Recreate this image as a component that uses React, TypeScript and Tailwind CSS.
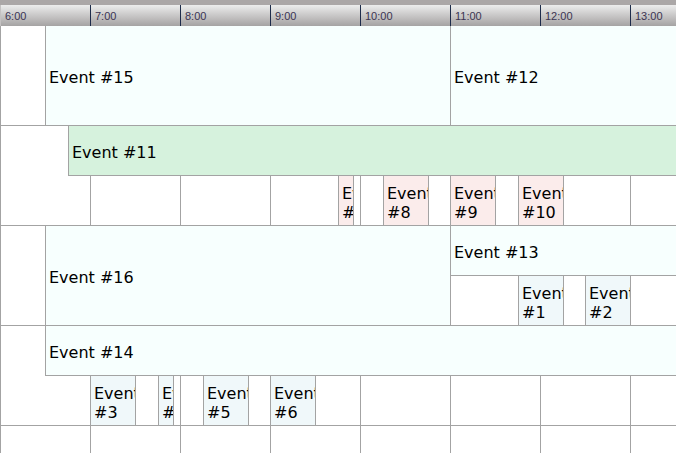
import React from "react";

const HOUR_W = 90;
const TOTAL_W = 720; // 6:00 .. 14:00
const START_MIN = 6 * 60;
const px = (h: number, m = 0) => Math.round((h * 60 + m - START_MIN) * 1.5);

type Tone = "azure" | "green" | "pink" | "blue";

const TONE: Record<Tone, string> = {
  azure: "bg-[#f7fffe]",
  green: "bg-[#d6f2dd]",
  pink: "bg-[#fbeceb]",
  blue: "bg-[#f0f8fa]",
};

type Ev = { id: number; s: number; e: number; tone: Tone };

const LINE = "border-[#a3a3a3]";

function Label({ id }: { id: number }) {
  return (
    <div className="flex h-full items-center overflow-hidden pl-[3px] pt-[4px]">
      <span className="text-[16px] leading-[normal] text-black">Event #{id}</span>
    </div>
  );
}

function Block({
  w,
  ev,
  bottom = false,
}: {
  w: number;
  ev?: Ev;
  bottom?: boolean;
}) {
  return (
    <div
      className={`h-full shrink-0 overflow-hidden border-l ${LINE} ${bottom ? "border-b" : ""} ${
        ev ? TONE[ev.tone] : "bg-white"
      }`}
      style={{ width: w }}
    >
      {ev ? <Label id={ev.id} /> : null}
    </div>
  );
}

function Plain({ w }: { w: number }) {
  return <div className="h-full shrink-0 border-l border-[#a3a3a3] bg-white" style={{ width: w }} />;
}

function Lane({ from, to, events }: { from: number; to: number; events: Ev[] }) {
  const set = new Set<number>([from, to]);
  for (let h = 0; h <= TOTAL_W; h += HOUR_W) if (h > from && h < to) set.add(h);
  events.forEach((ev) => {
    set.add(ev.s);
    set.add(ev.e);
  });
  const bounds = [...set]
    .filter((b) => !events.some((ev) => b > ev.s && b < ev.e))
    .sort((a, b) => a - b);
  const segs: { w: number; ev?: Ev }[] = [];
  for (let i = 0; i < bounds.length - 1; i++) {
    const a = bounds[i];
    const b = bounds[i + 1];
    segs.push({ w: b - a, ev: events.find((ev) => ev.s === a) });
  }
  return (
    <div className="flex h-full flex-1">
      {segs.map((sg, i) => (
        <Block key={i} w={sg.w} ev={sg.ev} />
      ))}
    </div>
  );
}

const hours = ["6:00", "7:00", "8:00", "9:00", "10:00", "11:00", "12:00", "13:00"];

export default function App() {
  const ev = (id: number, s: number, e: number, tone: Tone): Ev => ({ id, s, e, tone });

  const row2 = [
    ev(7, px(9, 45), px(9, 55), "pink"),
    ev(8, px(10, 15), px(10, 45), "pink"),
    ev(9, px(11), px(11, 30), "pink"),
    ev(10, px(11, 45), px(12, 15), "pink"),
  ];
  const row3 = [ev(1, px(11, 45), px(12, 15), "blue"), ev(2, px(12, 30), px(13), "blue")];
  const row4 = [
    ev(3, px(7), px(7, 30), "blue"),
    ev(4, px(7, 45), px(7, 55), "blue"),
    ev(5, px(8, 15), px(8, 45), "blue"),
    ev(6, px(9), px(9, 30), "blue"),
  ];

  return (
    <div className="h-[453px] w-[676px] overflow-hidden bg-white font-['DejaVu_Sans',Verdana,sans-serif]">
      <div className="w-[720px]">
        {/* header */}
        <div className="h-[5px] bg-[#aba7a7]" />
        <div className="flex h-[21px] bg-linear-to-b from-[#ededed] to-[#a5a3a3]">
          {hours.map((h, i) => (
            <div
              key={h}
              className={`h-full w-[90px] shrink-0 border-l pl-[4px] pt-[1px] font-['Liberation_Sans',Arial,sans-serif] text-[11px] leading-[20px] text-[#3b3452] ${
                i === 0 ? "border-[#c4c2c2]" : "border-[#1d2b4a]"
              }`}
            >
              {h}
            </div>
          ))}
        </div>

        {/* row 1 */}
        <div className={`flex h-[100px] border-b ${LINE}`}>
          <Plain w={px(6, 30)} />
          <Block w={px(11) - px(6, 30)} ev={ev(15, 0, 0, "azure")} />
          <Block w={TOTAL_W - px(11)} ev={ev(12, 0, 0, "azure")} />
        </div>

        {/* row 2 */}
        <div className={`flex h-[100px] flex-col border-b ${LINE}`}>
          <div className="flex h-[50px] shrink-0">
            <Plain w={px(6, 45)} />
            <Block w={TOTAL_W - px(6, 45)} ev={ev(11, 0, 0, "green")} bottom />
          </div>
          <div className="flex min-h-0 flex-1">
            <Lane from={0} to={TOTAL_W} events={row2} />
          </div>
        </div>

        {/* row 3 */}
        <div className={`flex h-[100px] border-b ${LINE}`}>
          <Plain w={px(6, 30)} />
          <Block w={px(11) - px(6, 30)} ev={ev(16, 0, 0, "azure")} />
          <div className="flex flex-1 flex-col">
            <div className="flex h-[50px] shrink-0">
              <Block w={TOTAL_W - px(11)} ev={ev(13, 0, 0, "azure")} bottom />
            </div>
            <div className="flex min-h-0 flex-1">
              <Lane from={px(11)} to={TOTAL_W} events={row3} />
            </div>
          </div>
        </div>

        {/* row 4 */}
        <div className={`flex h-[100px] flex-col border-b ${LINE}`}>
          <div className="flex h-[50px] shrink-0">
            <Plain w={px(6, 30)} />
            <Block w={TOTAL_W - px(6, 30)} ev={ev(14, 0, 0, "azure")} bottom />
          </div>
          <div className="flex min-h-0 flex-1">
            <Lane from={0} to={TOTAL_W} events={row4} />
          </div>
        </div>

        {/* row 5 */}
        <div className={`flex h-[100px] border-b ${LINE}`}>
          <Lane from={0} to={TOTAL_W} events={[]} />
        </div>
      </div>
    </div>
  );
}
